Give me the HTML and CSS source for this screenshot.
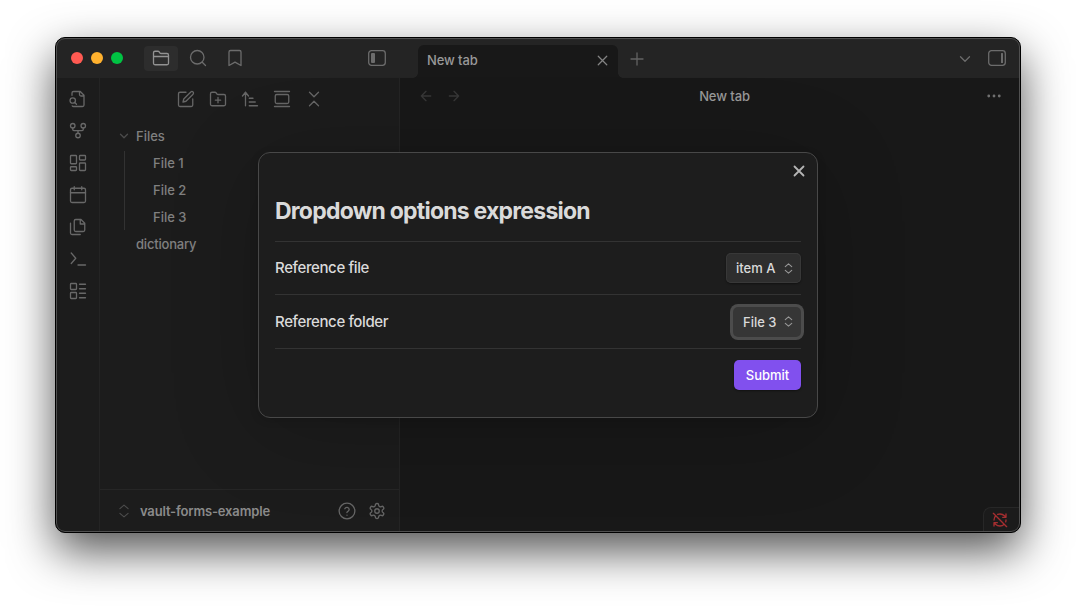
FILE: index.html
```html
<!DOCTYPE html>
<html lang="en">
<head>
<meta charset="utf-8">
<title>vault-forms-example</title>
<link rel="stylesheet" href="styles.css">
</head>
<body>
<svg class="sprite" aria-hidden="true">
  <symbol id="folder" viewBox="0 0 24 24"><path d="M20 21a2 2 0 0 0 2-2V8a2 2 0 0 0-2-2h-7.900a2 2 0 0 1-1.690-.9L9.600 3.900A2 2 0 0 0 7.930 3H4a2 2 0 0 0-2 2v14a2 2 0 0 0 2 2ZM2 10h20"/></symbol>
  <symbol id="search" viewBox="0 0 24 24"><circle cx="11" cy="11" r="9"/><path d="m22 22-4.3-4.3"/></symbol>
  <symbol id="bookmark" viewBox="0 0 24 24"><path d="m20 22-8-4.500L4 22V4a2 2 0 0 1 2-2h12a2 2 0 0 1 2 2z"/></symbol>
  <symbol id="file-search" viewBox="0 0 24 24"><path d="M14 2v4a2 2 0 0 0 2 2h4M4.3 21.2A2 2 0 0 0 6 22h12a2 2 0 0 0 2-2V7l-5-5H6a2 2 0 0 0-2 2v3"/><circle cx="5" cy="14" r="3.6"/><path d="m10 19-2.3-2.3"/></symbol>
  <symbol id="fork" viewBox="0 0 24 24"><circle cx="12" cy="18" r="3"/><circle cx="5" cy="5" r="3"/><circle cx="19" cy="5" r="3"/><path d="M19 8v2a1.500 1.500 0 0 1-1.500 1.500h-11A1.500 1.500 0 0 1 5 10V8M12 11.500V15"/></symbol>
  <symbol id="dashboard" viewBox="0 0 24 24"><rect x="2" y="2" width="8" height="11" rx="1"/><rect x="14" y="2" width="8" height="6" rx="1"/><rect x="14" y="12" width="8" height="10" rx="1"/><rect x="2" y="17" width="8" height="5" rx="1"/></symbol>
  <symbol id="calendar" viewBox="0 0 24 24"><path d="M7 1v4M17 1v4M2 9h20"/><rect x="2" y="3" width="20" height="19" rx="2"/></symbol>
  <symbol id="files" viewBox="0 0 24 24"><path d="M16 2H9a2 2 0 0 0-2 2v12a2 2 0 0 0 2 2h10a2 2 0 0 0 2-2V7zM15 2v6h6M2 7v13a2 2 0 0 0 2 2h11"/></symbol>
  <symbol id="terminal" viewBox="0 0 24 24"><path d="m3 18 6-7-6-7M12 20h10"/></symbol>
  <symbol id="layout-list" viewBox="0 0 24 24"><rect x="2" y="2" width="8" height="8" rx="1"/><rect x="2" y="14" width="8" height="8" rx="1"/><path d="M14 3h8M14 9h8M14 15h8M14 21h8"/></symbol>
  <symbol id="edit" viewBox="0 0 24 24"><path d="M12 3H4a2 2 0 0 0-2 2v15a2 2 0 0 0 2 2h15a2 2 0 0 0 2-2v-8M18.400 2.600a2.100 2.100 0 0 1 3 3L12 15l-4 1 1-4z"/></symbol>
  <symbol id="folder-plus" viewBox="0 0 24 24"><path d="M20 21a2 2 0 0 0 2-2V8a2 2 0 0 0-2-2h-7.900a2 2 0 0 1-1.690-.9L9.600 3.900A2 2 0 0 0 7.930 3H4a2 2 0 0 0-2 2v14a2 2 0 0 0 2 2ZM12 10v7M8.500 13.500h7"/></symbol>
  <symbol id="sort" viewBox="0 0 24 24"><path d="m2 8 4-5 4 5M6 3v18M11 11h5M11 16h8M11 21h11"/></symbol>
  <symbol id="gallery" viewBox="0 0 24 24"><path d="M2 2h20M2 22h20"/><rect x="3" y="6" width="18" height="12" rx="2"/></symbol>
  <symbol id="collapse" viewBox="0 0 24 24"><path d="m6 21 6-6 6 6M6 3l6 6 6-6"/></symbol>
  <symbol id="chevron" viewBox="0 0 24 24"><path d="m6 9 6 6 6-6"/></symbol>
  <symbol id="updown" viewBox="0 0 24 24"><path d="m5 16 7 6 7-6M5 8l7-6 7 6"/></symbol>
  <symbol id="left" viewBox="0 0 24 24"><path d="m12 19-7-7 7-7M19 12H5"/></symbol>
  <symbol id="right" viewBox="0 0 24 24"><path d="M5 12h14M12 5l7 7-7 7"/></symbol>
  <symbol id="x" viewBox="0 0 24 24"><path d="M18 6 6 18M6 6l12 12"/></symbol>
  <symbol id="plus" viewBox="0 0 24 24"><path d="M4 12h16M12 4v16"/></symbol>
  <symbol id="dots" viewBox="0 0 24 24"><circle cx="5" cy="12" r="1"/><circle cx="12" cy="12" r="1"/><circle cx="19" cy="12" r="1"/></symbol>
  <symbol id="help" viewBox="0 0 24 24"><circle cx="12" cy="12" r="10.500"/><path d="M9.100 9a3 3 0 0 1 5.800 1c0 2-3 3-3 4M12 17.500v.1"/></symbol>
  <symbol id="gear" viewBox="0 0 24 24"><path d="M12.220 2h-.44a2 2 0 0 0-2 2v.18a2 2 0 0 1-1 1.730l-.43.25a2 2 0 0 1-2 0l-.15-.08a2 2 0 0 0-2.730.73l-.22.38a2 2 0 0 0 .73 2.730l.15.1a2 2 0 0 1 1 1.720v.51a2 2 0 0 1-1 1.740l-.15.09a2 2 0 0 0-.73 2.730l.22.38a2 2 0 0 0 2.730.73l.15-.08a2 2 0 0 1 2 0l.43.25a2 2 0 0 1 1 1.730V20a2 2 0 0 0 2 2h.44a2 2 0 0 0 2-2v-.18a2 2 0 0 1 1-1.730l.43-.25a2 2 0 0 1 2 0l.15.08a2 2 0 0 0 2.730-.73l.22-.39a2 2 0 0 0-.73-2.730l-.15-.08a2 2 0 0 1-1-1.740v-.5a2 2 0 0 1 1-1.740l.15-.09a2 2 0 0 0 .73-2.730l-.22-.38a2 2 0 0 0-2.730-.73l-.15.08a2 2 0 0 1-2 0l-.43-.25a2 2 0 0 1-1-1.730V4a2 2 0 0 0-2-2z"/><circle cx="12" cy="12" r="3"/></symbol>
  <symbol id="sync-off" viewBox="0 0 24 24"><path d="M21 8 18.740 5.740A9.750 9.750 0 0 0 12 3c-1.200 0-2.400.3-3.500.7M21 3v5h-5M21 12c0 1-.16 2-.47 2.900M3 12a9 9 0 0 1 2.600-6.400M8 16H3v5M3 16l2.260 2.260A9.750 9.750 0 0 0 12 21c2.500 0 4.700-1 6.400-2.600M2 2l20 20"/></symbol>
</svg>

<div class="window">
  <header class="titlebar">
    <div class="lights"><i class="red"></i><i class="amber"></i><i class="green"></i></div>
    <nav class="side-tabs">
      <span class="side-tab active"><svg><use href="#folder"/></svg></span>
      <span class="side-tab"><svg><use href="#search"/></svg></span>
      <span class="side-tab"><svg><use href="#bookmark"/></svg></span>
    </nav>
    <svg class="toggle" viewBox="0 0 18 16"><rect x=".7" y=".7" width="16.600" height="14.600" rx="2.800"/><rect class="fill" x="3" y="3" width="4" height="10" rx="1"/></svg>
    <div class="tab"><span>New tab</span><svg><use href="#x"/></svg></div>
    <svg class="new-tab"><use href="#plus"/></svg>
    <svg class="tab-list"><use href="#chevron"/></svg>
    <svg class="toggle toggle-right" viewBox="0 0 18 16"><rect x=".7" y=".7" width="16.600" height="14.600" rx="2.800"/><rect class="fill" x="13" y="3" width="2" height="10" rx=".5"/></svg>
  </header>

  <div class="workspace">
    <nav class="ribbon">
      <svg><use href="#file-search"/></svg>
      <svg><use href="#fork"/></svg>
      <svg><use href="#dashboard"/></svg>
      <svg><use href="#calendar"/></svg>
      <svg><use href="#files"/></svg>
      <svg><use href="#terminal"/></svg>
      <svg><use href="#layout-list"/></svg>
    </nav>
    <aside class="sidebar">
      <div class="actions">
        <svg><use href="#edit"/></svg>
        <svg><use href="#folder-plus"/></svg>
        <svg><use href="#sort"/></svg>
        <svg><use href="#gallery"/></svg>
        <svg><use href="#collapse"/></svg>
      </div>
      <div class="tree">
        <div class="row"><svg><use href="#chevron"/></svg>Files</div>
        <div class="children">
          <div class="row">File 1</div>
          <div class="row">File 2</div>
          <div class="row">File 3</div>
        </div>
        <div class="row root">dictionary</div>
      </div>
      <footer class="vault">
        <svg class="switch"><use href="#updown"/></svg>
        <span class="vault-name">vault-forms-example</span>
        <svg><use href="#help"/></svg>
        <svg><use href="#gear"/></svg>
      </footer>
    </aside>
    <main class="pane">
      <div class="view-header">
        <div class="history"><svg><use href="#left"/></svg><svg><use href="#right"/></svg></div>
        <span class="view-title">New tab</span>
        <svg class="more"><use href="#dots"/></svg>
      </div>
      <div class="status"><svg><use href="#sync-off"/></svg></div>
    </main>
  </div>

  <section class="modal">
    <svg class="close"><use href="#x"/></svg>
    <h1>Dropdown options expression</h1>
    <div class="setting"><span class="label">Reference file</span><button class="dropdown"><span>item A</span><svg><use href="#updown"/></svg></button></div>
    <div class="setting second"><span class="label">Reference folder</span><button class="dropdown focused"><span>File 3</span><svg><use href="#updown"/></svg></button></div>
    <div class="setting last"><button class="submit">Submit</button></div>
  </section>
</div>
</body>
</html>
```
FILE: styles.css
```css
* { box-sizing: border-box; }
body {
  margin: 0;
  height: 606px;
  padding: 37px 55px;
  background: #fff;
  overflow: hidden;
  font: 500 13px/18px Inter, "Liberation Sans", sans-serif;
  color: #808080;
}
.sprite { position: absolute; width: 0; height: 0; }
svg {
  width: 18px;
  height: 18px;
  flex: none;
  fill: none;
  stroke: currentColor;
  stroke-width: 1.75;
  stroke-linecap: round;
  stroke-linejoin: round;
}
.window {
  position: relative;
  width: 966px;
  height: 496px;
  border: 1px solid #000;
  border-radius: 10px;
  overflow: hidden;
  background: #1c1c1c;
  display: flex;
  flex-direction: column;
  box-shadow: 0 18px 46px rgba(0, 0, 0, .68);
}
.window::after {
  content: "";
  position: absolute;
  inset: 0;
  border: 1px solid #505050;
  border-radius: 9px;
  pointer-events: none;
}
.titlebar {
  flex: none;
  height: 40px;
  background: #242424;
  display: flex;
  align-items: center;
  color: #6c6c6c;
}
.lights { display: flex; gap: 8px; margin-left: 15px; width: 73px; }
.lights i { width: 12px; height: 12px; border-radius: 50%; }
.red { background: #ff5a52; }
.amber { background: #ffb12e; }
.green { background: #00c343; }
.side-tabs { display: flex; gap: 3px; width: 224px; }
.side-tab {
  width: 34px;
  height: 25px;
  border-radius: 4px;
  display: flex;
  align-items: center;
  justify-content: center;
}
.side-tab.active { background: #2d2d2d; color: #929292; }
.toggle { width: 18px; height: 16px; stroke-width: 1.300; }
.toggle .fill { fill: #6c6c6c; stroke: none; }
.toggle-right { margin: 0 14px; }
.tab {
  position: relative;
  align-self: flex-end;
  width: 200px;
  height: 33px;
  margin-left: 32px;
  padding: 0 8px 3px 9px;
  border-radius: 6px 6px 0 0;
  background: #181818;
  color: #999;
  letter-spacing: -.1px;
  display: flex;
  align-items: center;
  justify-content: space-between;
}
.tab svg { width: 17px; height: 17px; color: #848484; margin-right: -1px; }
.tab::before, .tab::after {
  content: "";
  position: absolute;
  bottom: 0;
  width: 5px;
  height: 5px;
}
.tab::before { left: -5px; background: radial-gradient(circle at 0 0, transparent 4.500px, #181818 5px); }
.tab::after { right: -5px; background: radial-gradient(circle at 100% 0, transparent 4.500px, #181818 5px); }
.new-tab { margin: 1px 0 0 10px; color: #626262; }
.tab-list { margin: 1px 0 0 auto; }
.workspace { flex: 1; display: flex; min-height: 0; }
.ribbon {
  width: 44px;
  border-right: 1px solid #242424;
  padding: 12px 0 0 13px;
  display: flex;
  flex-direction: column;
  gap: 14px;
  color: #686868;
}
.sidebar {
  width: 300px;
  border-right: 1px solid #242424;
  display: flex;
  flex-direction: column;
}
.actions {
  display: flex;
  justify-content: center;
  gap: 14px;
  padding: 12px 0 14px 1px;
  color: #666;
}
.tree { flex: 1; }
.row { height: 27px; display: flex; align-items: center; }
.tree > .row { padding-left: 18px; }
.tree > .row svg { width: 14px; height: 14px; margin: 1px 5px 0 -1px; color: #4b4b4b; stroke-width: 2.200; }
.tree > .row.root { padding-left: 36px; letter-spacing: -.2px; }
.children { margin-left: 24px; padding-left: 29px; background: linear-gradient(#323232, #323232) 0 2px / 1px 79px no-repeat; }
.vault {
  height: 43px;
  border-top: 1px solid #262626;
  padding: 0 13px 0 17px;
  display: flex;
  align-items: center;
  gap: 12px;
  color: #666;
}
.switch { width: 14px; height: 14px; color: #4c4c4c; margin-right: -3px; stroke-width: 2; }
.vault-name { flex: 1; color: #8a8a8a; font-weight: 600; letter-spacing: -.16px; }
.pane {
  flex: 1;
  background: #181818;
  display: flex;
  flex-direction: column;
  justify-content: space-between;
}
.view-header {
  height: 36px;
  padding: 0 17px 0 18px;
  display: grid;
  grid-template-columns: 1fr auto 1fr;
  align-items: center;
}
.history { display: flex; gap: 12px; color: #373737; }
.view-title { color: #999; margin: 0 -14px 1px 14px; letter-spacing: -.1px; }
.history svg { width: 16px; height: 16px; stroke-width: 2; }
.more { justify-self: end; color: #707070; }
.status {
  align-self: flex-end;
  width: 37px;
  height: 25px;
  border: solid #272727;
  border-width: 1px 0 0 1px;
  border-radius: 8px 0 0;
  background: #1b1b1b;
  color: #a52e30;
  padding: 4px 0 0 8px;
}
.status svg { width: 16px; height: 16px; stroke-width: 2; }
.modal {
  position: absolute;
  left: 202px;
  top: 114px;
  width: 560px;
  height: 266px;
  padding: 0 16px;
  background: #1d1d1d;
  border: 1px solid #484848;
  border-radius: 12px;
  box-shadow: 0 2px 8px rgba(0, 0, 0, .15), 0 12px 90px rgba(0, 0, 0, .2);
  color: #dadada;
}
.close { position: absolute; right: 9px; top: 9px; color: #b5b5b5; stroke-width: 2.400; }
h1 {
  margin: 0;
  height: 88px;
  padding-top: 42px;
  font-size: 23px;
  line-height: 32px;
  font-weight: 700;
  letter-spacing: -.77px;
  white-space: nowrap;
}
.setting {
  height: 53px;
  border-top: 1px solid #333;
  display: flex;
  align-items: center;
  justify-content: space-between;
}
.second { height: 54px; }
.last { justify-content: flex-end; }
.label { font-size: 15px; font-weight: 500; letter-spacing: -.38px; }
button { font: inherit; border: 0; height: 30px; border-radius: 5px; color: #dadada; }
.dropdown {
  width: 75px;
  padding: 0 7px 0 10px;
  background: #2e2e2e;
  display: flex;
  align-items: center;
  justify-content: space-between;
  box-shadow: inset 0 0 0 1px #383838, 0 1px 2px rgba(0, 0, 0, .4);
}
.dropdown svg { width: 11px; height: 11px; stroke-width: 2.400; color: #999; }
.dropdown.focused { width: 68px; background: #363636; box-shadow: 0 0 0 3px #4c4c4c; }
.submit { width: 67px; padding: 0; background: #8150ee; color: #fff; box-shadow: 0 1px 2px rgba(0, 0, 0, .4); }
```
